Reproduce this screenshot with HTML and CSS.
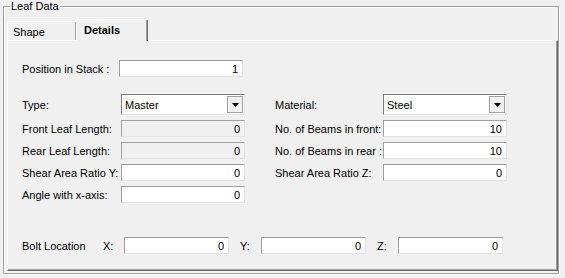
FILE: index.html
```html
<!DOCTYPE html>
<html lang="en">
  <head>
    <meta charset="UTF-8" />
    <title>Leaf Data</title>
    <link rel="stylesheet" href="styles.css">
  </head>
  <body>
    <fieldset class="group">
      <legend>Leaf Data</legend>

      <div class="tabs">
        <div class="tab">Shape</div>
        <div class="tab active">Details</div>
      </div>

      <div class="panel">
        <div class="stack-row">
          <label class="stack-label">Position in Stack :</label>
          <input class="edit" type="text" value="1" />
        </div>

        <div class="fields">
          <label>Type:</label>
          <div class="combo">
            <span class="combo-text">Master</span>
            <span class="drop">
              <svg width="7" height="4" viewBox="0 0 7 4"><polygon points="0,0 7,0 3.5,4" fill="#000" /></svg>
            </span>
          </div>
          <span></span>
          <label>Material:</label>
          <div class="combo">
            <span class="combo-text">Steel</span>
            <span class="drop">
              <svg width="7" height="4" viewBox="0 0 7 4"><polygon points="0,0 7,0 3.5,4" fill="#000" /></svg>
            </span>
          </div>

          <label>Front Leaf Length:</label>
          <input class="edit" type="text" value="0" disabled />
          <span></span>
          <label>No. of Beams in front:</label>
          <input class="edit" type="text" value="10" />

          <label>Rear Leaf Length:</label>
          <input class="edit" type="text" value="0" disabled />
          <span></span>
          <label>No. of Beams in rear :</label>
          <input class="edit" type="text" value="10" />

          <label>Shear Area Ratio Y:</label>
          <input class="edit" type="text" value="0" />
          <span></span>
          <label>Shear Area Ratio Z:</label>
          <input class="edit" type="text" value="0" />

          <label>Angle with x-axis:</label>
          <input class="edit" type="text" value="0" />
        </div>

        <div class="bolt-row">
          <span class="bolt-title">Bolt Location</span>
          <span class="axis">X:</span>
          <input class="edit bolt" type="text" value="0" />
          <span class="axis">Y:</span>
          <input class="edit bolt" type="text" value="0" />
          <span class="axis">Z:</span>
          <input class="edit bolt" type="text" value="0" />
        </div>
      </div>
    </fieldset>
  </body>
</html>
```

FILE: styles.css
```css
body {
  margin: 0;
  width: 565px;
  height: 278px;
  overflow: hidden;
  background: #f0f0f0;
  font-family: "Liberation Sans", Arial, sans-serif;
  font-size: 11px;
  color: #000;
}

/* Etched group box round the whole thing */
.group {
  margin: 0 6px 0 3px;
  padding: 0 0 2px 3px;
  border: 1px solid #a0a0a0;
  box-shadow: inset 1px 1px 0 #fff, 1px 1px 0 #fff;
  min-width: 0;
}

.group legend {
  margin-left: 3px;
  padding: 0 1px;
  line-height: 13px;
}

/* Tab strip */
.tabs {
  display: flex;
  align-items: flex-end;
  height: 21px;
  margin-top: 6px;
}

.tab {
  position: relative;
  box-sizing: border-box;
  width: 70px;
  height: 19px;
  padding: 4px 0 0 5px;
  border: 1px solid #fff;
  border-right-color: #696969;
  border-bottom: none;
  border-radius: 2px 2px 0 0;
  box-shadow: inset -1px 0 0 #a0a0a0;
  background: #f0f0f0;
}

.tab.active {
  width: 72px;
  height: 22px;
  margin-left: -1px;
  margin-bottom: -1px;
  padding: 4px 0 0 7px;
  font-weight: bold;
  z-index: 1;
}

/* Tab page */
.panel {
  box-sizing: border-box;
  height: 231px;
  padding: 19px 0 0 14px;
  border: 1px solid #fff;
  border-right-color: #696969;
  border-bottom-color: #696969;
  box-shadow: inset -1px -1px 0 #a0a0a0;
}

.edit {
  box-sizing: border-box;
  width: 124px;
  height: 17px;
  margin: 0;
  padding: 0 4px 0 2px;
  border: 1px solid;
  border-color: #a0a0a0 #e3e3e3 #e3e3e3 #a0a0a0;
  background: #fff;
  font: inherit;
  color: #000;
  text-align: right;
  outline: none;
}

.edit:disabled {
  background: #f0f0f0;
  color: #000;
}

.stack-row {
  display: flex;
  align-items: center;
}

.stack-label {
  width: 97px;
}

.fields {
  display: grid;
  grid-template-columns: 99px 124px 30px 108px 124px;
  grid-template-rows: 21px;
  grid-auto-rows: 17px;
  row-gap: 5px;
  align-items: center;
  margin-top: 17px;
}

.fields label {
  white-space: nowrap;
}

/* Drop-down list */
.combo {
  box-sizing: border-box;
  display: flex;
  align-items: center;
  height: 21px;
  padding: 1px;
  border: 1px solid;
  border-color: #7a7a7a #e3e3e3 #e3e3e3 #7a7a7a;
  background: #fff;
}

.combo-text {
  flex: 1;
  padding-left: 2px;
}

.drop {
  box-sizing: border-box;
  display: flex;
  align-items: center;
  justify-content: center;
  width: 16px;
  height: 17px;
  border: 1px solid #a0a0a0;
  box-shadow: inset 1px 1px 0 #fff;
  background: #f0f0f0;
}

/* Bolt location line */
.bolt-row {
  display: flex;
  align-items: center;
  margin-top: 34px;
}

.bolt-title {
  width: 81px;
}

.axis {
  width: 21px;
}

.edit.bolt {
  width: 105px;
  margin-right: 11px;
}
```
